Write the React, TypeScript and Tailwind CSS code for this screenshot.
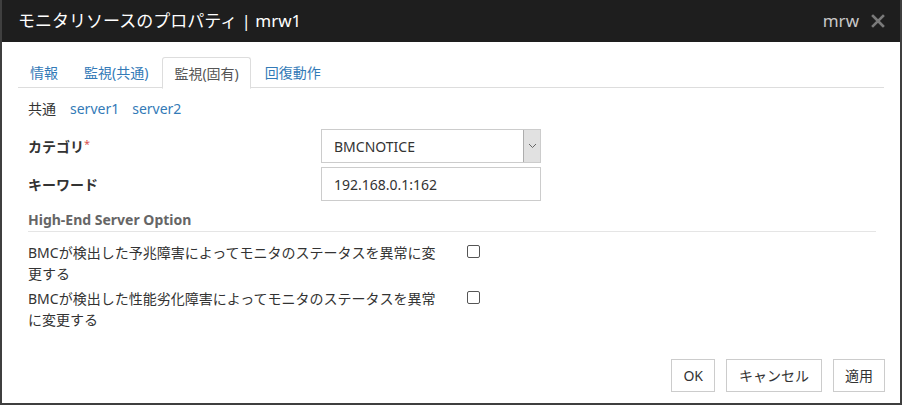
const font = { fontFamily: '"Noto Sans", "Noto Sans CJK JP", sans-serif' };

const tabs = [
  { label: "情報", active: false },
  { label: "監視(共通)", active: false },
  { label: "監視(固有)", active: true },
  { label: "回復動作", active: false },
];

const options = [
  "BMCが検出した予兆障害によってモニタのステータスを異常に変更する",
  "BMCが検出した性能劣化障害によってモニタのステータスを異常に変更する",
];

function CloseIcon() {
  return (
    <svg width="14" height="14" viewBox="0 0 14 14" aria-hidden>
      <path d="M2 2 L12 12 M12 2 L2 12" stroke="#7a7a7a" strokeWidth="2.6" strokeLinecap="square" />
    </svg>
  );
}

function Chevron() {
  return (
    <svg width="9" height="6" viewBox="0 0 9 6" aria-hidden>
      <path d="M1 1 L4.5 4.5 L8 1" fill="none" stroke="#666" strokeWidth="1" />
    </svg>
  );
}

export default function App() {
  return (
    <div className="w-[904px] h-[406px] bg-white text-[#333]" style={font}>
      <div className="w-[902px] h-[405px] border-x-2 border-b-2 border-[#3f3f3f] flex flex-col">
        {/* タイトルバー */}
        <div className="h-[42px] bg-[#1e1e1e] flex items-center justify-between pl-[16px] pr-[15px] shrink-0">
          <span className="text-[17px] text-white">モニタリソースのプロパティ | mrw1</span>
          <div className="flex items-center gap-[12px]">
            <span className="text-[17px] text-[#c8c8c8]">mrw</span>
            <CloseIcon />
          </div>
        </div>

        <div className="flex-1 flex flex-col px-[16px] pt-[15px]">
          {/* タブ */}
          <div className="flex h-[31px] border-b border-[#dddddd]">
            {tabs.map((t) => (
              <div
                key={t.label}
                className={
                  t.active
                    ? "px-[11px] mr-[2px] h-[32px] flex items-center text-[14px] text-[#555] bg-white border border-[#dddddd] border-b-white rounded-t-[3px]"
                    : "px-[11px] mr-[2px] h-[31px] flex items-center text-[14px] text-[#337ab7] border border-transparent"
                }
              >
                {t.label}
              </div>
            ))}
          </div>

          <div className="px-[10px]">
            <div className="flex items-center gap-[14px] mt-[10px] h-[20px] text-[14px]">
              <span>共通</span>
              <span className="text-[#337ab7]">server1</span>
              <span className="text-[#337ab7] -ml-[1px]">server2</span>
            </div>

            {/* カテゴリ / キーワード */}
            <div className="flex items-center mt-[11px]">
              <div className="w-[293px] text-[14px] font-bold">
                カテゴリ<span className="text-[#d9534f] text-[11px] align-top font-normal">*</span>
              </div>
              <div className="w-[220px] h-[34px] border border-[#cccccc] flex items-center justify-between">
                <span className="pl-[12px] text-[14px]">BMCNOTICE</span>
                <div className="w-[17px] h-[32px] bg-[#e1e1e1] border-l border-[#adadad] flex items-center justify-center">
                  <Chevron />
                </div>
              </div>
            </div>
            <div className="flex items-center mt-[4px]">
              <div className="w-[293px] text-[14px] font-bold">キーワード</div>
              <div className="w-[220px] h-[34px] border border-[#cccccc] flex items-center pl-[12px] text-[14px]">
                192.168.0.1:162
              </div>
            </div>

            {/* High-End Server Option */}
            <div className="mt-[9px] h-[22px] leading-[20px] border-b border-[#e5e5e5] text-[14px] font-bold text-[#666] w-[848px]">
              High-End Server Option
            </div>

            {options.map((o, i) => (
              <div key={o} className={i === 0 ? "flex items-start mt-[10px]" : "flex items-start mt-[4px]"}>
                <div className="w-[414px] text-[14px] leading-[21px]">{o}</div>
                <div className="ml-[25px] mt-[3px] w-[13px] h-[13px] border border-[#555] rounded-[2px] bg-white" />
              </div>
            ))}
          </div>

          {/* ボタン */}
          <div className="flex justify-end gap-[11px] mt-[29px] -mr-[1px]">
            <button className="h-[33px] px-[11px] border border-[#cccccc] bg-white text-[14px]">OK</button>
            <button className="h-[33px] px-[12px] border border-[#cccccc] bg-white text-[14px]">キャンセル</button>
            <button className="h-[33px] px-[11px] border border-[#cccccc] bg-white text-[14px]">適用</button>
          </div>
        </div>
      </div>
    </div>
  );
}
